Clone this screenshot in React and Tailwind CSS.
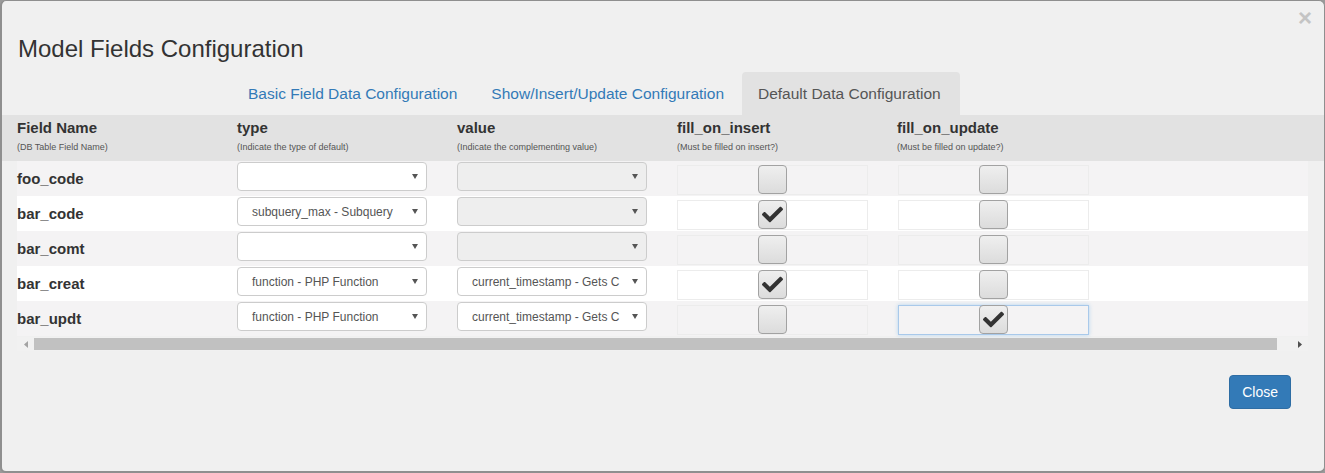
import React from "react";
import clsx from "clsx";
import { FaCheck } from "react-icons/fa";

// Field rows shown in the "Default Data Configuration" tab
const fields = [
  { name: "foo_code", type: "", value: "", valueDisabled: true, insert: false, update: false },
  { name: "bar_code", type: "subquery_max - Subquery", value: "", valueDisabled: true, insert: true, update: false },
  { name: "bar_comt", type: "", value: "", valueDisabled: true, insert: false, update: false },
  { name: "bar_creat", type: "function - PHP Function", value: "current_timestamp - Gets C", insert: true, update: false },
  { name: "bar_updt", type: "function - PHP Function", value: "current_timestamp - Gets C", insert: false, update: true, focus: true },
];

const columns = [
  { title: "Field Name", hint: "(DB Table Field Name)" },
  { title: "type", hint: "(Indicate the type of default)" },
  { title: "value", hint: "(Indicate the complementing value)" },
  { title: "fill_on_insert", hint: "(Must be filled on insert?)" },
  { title: "fill_on_update", hint: "(Must be filled on update?)" },
];

const tabs = [
  { label: "Basic Field Data Configuration" },
  { label: "Show/Insert/Update Configuration" },
  { label: "Default Data Configuration", active: true },
];

const SelectBox = ({ text, disabled }) => (
  <div
    className={clsx(
      "mt-[1px] flex h-[29px] w-[190px] items-center rounded-[4px] border border-[#cccccc] pl-[14px] pr-[8px]",
      disabled ? "bg-[#eeeeee]" : "bg-white"
    )}
  >
    <span className="whitespace-nowrap text-[12px] leading-[16px] text-[#555555]">{text}</span>
    <svg className="ml-auto" width="6" height="5" viewBox="0 0 6 5">
      <path d="M0 0h6L3 5z" fill="#555555" />
    </svg>
  </div>
);

const CheckCell = ({ checked, focus }) => (
  <div
    className={clsx(
      "mt-[4px] flex h-[30px] w-[191px] justify-center border",
      focus
        ? "border-[#a9c9ea] shadow-[0_0_4px_rgba(102,175,233,0.45)]"
        : "border-[#ececec]"
    )}
  >
    <div className="-mt-[1px] flex h-[29px] w-[29px] items-center justify-center rounded-[4px] border border-[#a2a2a2] bg-gradient-to-b from-[#efefef] to-[#dcdcdc]">
      {checked && <FaCheck size={21} color="#333333" />}
    </div>
  </div>
);

export default function App() {
  return (
    <div className="h-[473px] w-[1325px] bg-[#9a9a9a] font-['Liberation_Sans',Arial,sans-serif]">
      <div className="flex h-[473px] flex-col rounded-[6px] border border-b-2 border-l-2 border-[#8f8f8f] bg-[#f0f0f0]">
        {/* header */}
        <div className="flex h-[71px] items-start">
          <h4 className="pl-[16px] pt-[36px] text-[24px] leading-[24px] text-[#333333]">
            Model Fields Configuration
          </h4>
          <span className="ml-auto mr-[12px] mt-[5px] text-[24px] font-bold leading-[24px] text-[#c4c4c4]">
            ×
          </span>
        </div>

        {/* tabs */}
        <div className="flex h-[43px] pl-[230px]">
          {tabs.map((t) => (
            <div
              key={t.label}
              className={clsx(
                "mr-[2px] rounded-t-[4px] py-[10px] text-[15.5px] leading-[23px]",
                t.active ? "bg-[#e2e2e2] pl-[16px] pr-[19px] text-[#555555]" : "px-[16px] text-[#337ab7]"
              )}
            >
              {t.label}
            </div>
          ))}
        </div>

        {/* table head */}
        <div className="flex h-[46px] bg-[#e2e2e2] pl-[15px]">
          {columns.map((c) => (
            <div key={c.title} className="w-[220px] pt-[3px]">
              <div className="text-[15px] font-bold leading-[20px] text-[#333333]">{c.title}</div>
              <div className="mt-[4px] text-[9px] leading-[11px] text-[#555555]">{c.hint}</div>
            </div>
          ))}
        </div>

        {/* table body */}
        <div className="ml-[15px] w-[1291px]">
          {fields.map((f, i) => (
            <div
              key={f.name}
              className={clsx("flex h-[35px]", i % 2 === 0 ? "bg-[#f4f3f4]" : "bg-white")}
            >
              <div className="flex w-[220px] items-center pt-[1px] text-[15px] font-bold text-[#333333]">
                {f.name}
              </div>
              <div className="w-[220px]">
                <SelectBox text={f.type} />
              </div>
              <div className="w-[220px]">
                <SelectBox text={f.value} disabled={f.valueDisabled} />
              </div>
              <div className="w-[220px]">
                <CheckCell checked={f.insert} />
              </div>
              <div className="w-[220px] pl-[1px]">
                <CheckCell checked={f.update} focus={f.focus} />
              </div>
            </div>
          ))}

          {/* horizontal scrollbar */}
          <div className="mt-[1px] flex h-[14px] items-center bg-[#f1f1f1]">
            <div className="flex w-[17px] justify-center">
              <svg width="4" height="7" viewBox="0 0 4 7">
                <path d="M4 0v7L0 3.5z" fill="#a3a3a3" />
              </svg>
            </div>
            <div className="h-[12px] w-[1243px] bg-[#c1c1c1]" />
            <div className="w-[14px]" />
            <div className="flex w-[17px] justify-center">
              <svg width="4" height="7" viewBox="0 0 4 7">
                <path d="M0 0v7L4 3.5z" fill="#505050" />
              </svg>
            </div>
          </div>
        </div>

        {/* footer */}
        <div className="flex justify-end pr-[33px] pt-[24px]">
          <button className="rounded-[4px] border border-[#2e6da4] bg-[#337ab7] px-[12px] py-[6px] text-[14px] leading-[20px] text-white">
            Close
          </button>
        </div>
      </div>
    </div>
  );
}
